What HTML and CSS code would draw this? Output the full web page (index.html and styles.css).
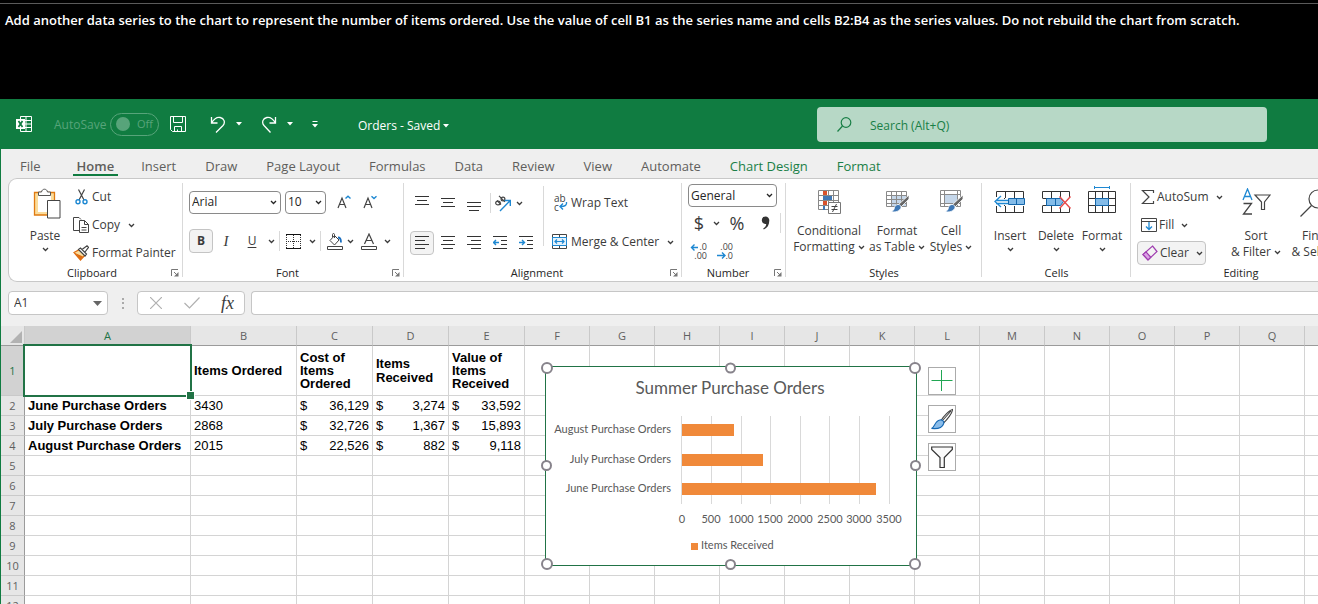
FILE: index.html
```html
<!DOCTYPE html>
<html lang="en">
<head>
<meta charset="utf-8">
<title>Orders - Excel</title>
<link rel="stylesheet" href="styles.css">
</head>
<body>
<svg class="defs" aria-hidden="true">
  <symbol id="chev" viewBox="0 0 7 5"><path d="M1 1l2.5 2.5L6 1" fill="none" stroke="currentColor" stroke-width="1.3"/></symbol>
  <symbol id="caret" viewBox="0 0 6 4"><path d="M0 0h6L3 3.5z" fill="currentColor"/></symbol>
  <symbol id="launch" viewBox="0 0 8 8"><path d="M.5 7V.5H7M3 3l3.5 3.5" fill="none" stroke="#777"/><path d="M7.500 3v4.500H3z" fill="#777"/></symbol>
</svg>

<p class="task">Add another data series to the chart to represent the number of items ordered. Use the value of cell B1 as the series name and cells B2:B4 as the series values. Do not rebuild the chart from scratch.</p>

<div class="app">
  <header class="title-bar">
    <svg class="logo" width="16" height="16" viewBox="0 0 16 16"><path d="M4.500 .5h11v15h-11zM4 4.500h11.500M4 8h11.500M4 11.500h11.500M10 .5v15" fill="none" stroke="#fff"/><rect y="3" width="9" height="10" fill="#fff"/><path d="M2.500 5l4 6M6.500 5l-4 6" stroke="#107c41" stroke-width="1.700"/></svg>
    <span class="autosave">AutoSave</span>
    <button class="toggle" type="button" aria-label="AutoSave off"><span class="knob"></span>Off</button>
    <button class="tool" type="button" aria-label="Save"><svg width="16" height="16" viewBox="0 0 16 16" fill="none" stroke="#fff"><path d="M.5 .5h15v15H2.500l-2-2zM3.500 .5v6h9v-6M4.500 15.500v-5h7v5M7.500 15.500v-2"/></svg></button>
    <button class="tool undo" type="button" aria-label="Undo"><svg width="16" height="17" viewBox="0 0 16 17" fill="none" stroke="#fff" stroke-width="1.300"><path d="M1.500 1v6h6M1.700 6.700C4 3 7 .8 10.200 1.500c4 .8 5.400 4.800 2.800 8L6 16.500"/></svg><svg width="6" height="4"><use href="#caret"/></svg></button>
    <button class="tool redo" type="button" aria-label="Redo"><svg width="16" height="17" viewBox="0 0 16 17" fill="none" stroke="#fff" stroke-width="1.300"><path d="M14.500 1v6h-6M14.300 6.700C12 3 9 .8 5.800 1.500c-4 .8-5.400 4.800-2.800 8l6.500 7"/></svg><svg width="6" height="4"><use href="#caret"/></svg></button>
    <button class="tool" type="button" aria-label="Customize"><svg width="6" height="7" viewBox="0 0 6 7"><path d="M.5 .5h5" stroke="#fff"/><path d="M0 3h6L3 6.500z" fill="#fff"/></svg></button>
    <button class="doc-name" type="button">Orders - Saved <svg width="6" height="4"><use href="#caret"/></svg></button>
    <label class="search"><svg width="15" height="15" viewBox="0 0 15 15" fill="none" stroke="#1a7f47" stroke-width="1.200"><circle cx="9" cy="5.500" r="4.800"/><path d="M5.500 9L.5 14.500"/></svg><input type="search" placeholder="Search (Alt+Q)" aria-label="Search"></label>
  </header>

  <nav class="tabs">
    <a href="#">File</a><a href="#" class="current">Home</a><a href="#">Insert</a><a href="#">Draw</a><a href="#">Page Layout</a><a href="#">Formulas</a><a href="#">Data</a><a href="#">Review</a><a href="#">View</a><a href="#">Automate</a><a href="#" class="context">Chart Design</a><a href="#" class="context">Format</a>
  </nav>

  <div class="ribbon">
    <section class="group clipboard">
      <div class="body">
        <button class="big paste" type="button"><span class="pic"><svg width="28" height="31" viewBox="0 0 28 31"><path d="M2 4h19v23H2z" fill="#fbdc9b"/><path d="M5 7h13v17H5z" fill="#fff"/><path d="M1.500 4.500h20v22.500h-20z" fill="none" stroke="#e07a10" stroke-width="1.300"/><path d="M5.500 7.500V4h3C9 .3 14 .3 14.500 4h3v3.500z" fill="#fff" stroke="#555"/><path d="M14.500 12.500h12.500v17.500H14.500z" fill="#fff" stroke="#444"/></svg></span>Paste<svg class="below" width="7" height="5"><use href="#chev"/></svg></button>
        <div class="stack">
          <button class="line" type="button"><svg width="16" height="16" viewBox="0 0 16 16" fill="none"><path d="M5.500 .5L11 11M11.500 .5L6 11" stroke="#444" stroke-width="1.200"/><circle cx="5" cy="12.800" r="2" stroke="#1e88d2" stroke-width="1.400"/><circle cx="12" cy="12.800" r="2" stroke="#1e88d2" stroke-width="1.400"/></svg>Cut</button>
          <button class="line" type="button"><svg width="16" height="16" viewBox="0 0 16 16" fill="none" stroke="#444"><path d="M6 13.500H.5v-13H6l2 2M6.500 3.500h5l4 4v8h-9zM11.500 3.500v4h4M8.500 10.500h5M8.500 13h5"/></svg>Copy<svg class="gap-chev" width="7" height="5"><use href="#chev"/></svg></button>
          <button class="line" type="button"><svg width="16" height="16" viewBox="0 0 16 16"><path d="M1 7.500l5.500-3 5.500 5.500-4.500 5z" fill="#fbdc9b" stroke="#dd6b10" stroke-width="1.300"/><path d="M2 8l5.500 6.500 2.500-3z" fill="#dd6b10"/><path d="M5.500 4.500l2-1.500 6 6-1.500 2zM9 4.500L14 .8l1.500 1.500L12 7" fill="#fff" stroke="#444" stroke-width="1.200"/></svg>Format Painter</button>
        </div>
      </div>
      <footer><span>Clipboard</span><svg width="8" height="8"><use href="#launch"/></svg></footer>
    </section>

    <section class="group font">
      <div class="body rows">
        <div class="row first">
          <span class="picker name"><select aria-label="Font"><option>Arial</option></select><svg width="7" height="5"><use href="#chev"/></svg></span>
          <span class="picker size"><select aria-label="Font size"><option>10</option></select><svg width="7" height="5"><use href="#chev"/></svg></span>
          <button class="tile grow" type="button" aria-label="Increase font size"><svg width="14" height="14" viewBox="0 0 14 14" fill="none"><path d="M1 13L5 3l4 10M2.500 9.500h5" stroke="#444" stroke-width="1.200"/><path d="M8.500 3.500L11 1.200l2.500 2.300" stroke="#1e88d2" stroke-width="1.400"/></svg></button>
          <button class="tile" type="button" aria-label="Decrease font size"><svg width="14" height="14" viewBox="0 0 14 14" fill="none"><path d="M1 13L5 3l4 10M2.500 9.500h5" stroke="#444" stroke-width="1.200"/><path d="M8.500 1.200L11 3.500l2.500-2.300" stroke="#1e88d2" stroke-width="1.400"/></svg></button>
        </div>
        <div class="row">
          <button class="tile on bold" type="button">B</button>
          <button class="tile italic" type="button">I</button>
          <button class="tile underline" type="button">U</button>
          <button class="drop" type="button" aria-label="Underline styles"><svg width="7" height="5"><use href="#chev"/></svg></button>
          <i class="rule"></i>
          <button class="tile narrow" type="button" aria-label="Borders"><svg width="16" height="15" viewBox="0 0 16 15" fill="none" stroke="#333"><path d="M0 .5h15M0 14.500h15" stroke="#111"/><path d="M.5 1v13M14.500 1v13M7.500 1v13M0 7.500h15" stroke-dasharray="1 1"/></svg></button>
          <button class="drop" type="button" aria-label="Border styles"><svg width="7" height="5"><use href="#chev"/></svg></button>
          <i class="rule"></i>
          <button class="tile narrow" type="button" aria-label="Fill color"><svg width="16" height="17" viewBox="0 0 16 17" fill="none" stroke="#444"><path d="M3 7.500l4.500-5 4.500 4.500-4.500 5zM7.500 5V1.500c0-1.300-2-1.300-2 0V4"/><path d="M11 4.500c2 0 3 1 3 5" stroke="#1b6fc0" stroke-width="1.800"/><path d="M.5 13.500h15v3H.500z"/></svg></button>
          <button class="drop slim" type="button" aria-label="Fill colors"><svg width="7" height="5"><use href="#chev"/></svg></button>
          <button class="tile wide" type="button" aria-label="Font color"><svg width="16" height="17" viewBox="0 0 16 17" fill="none" stroke="#444"><path d="M3.500 11L8 1l4.500 10M5 7.500h6" stroke-width="1.200"/><path d="M.5 13.500h15v3H.500z"/></svg></button>
          <button class="drop slim" type="button" aria-label="Font colors"><svg width="7" height="5"><use href="#chev"/></svg></button>
        </div>
      </div>
      <footer><span>Font</span><svg width="8" height="8"><use href="#launch"/></svg></footer>
    </section>

    <section class="group alignment">
      <div class="body">
        <div class="rows">
          <div class="row first spaced">
            <button class="tile" type="button" aria-label="Top align"><svg width="14" height="16" viewBox="0 0 14 16" stroke="#333"><path d="M0 1.500h14M2 5.500h10M0 9.500h14"/></svg></button>
            <button class="tile" type="button" aria-label="Middle align"><svg width="14" height="16" viewBox="0 0 14 16" stroke="#333"><path d="M0 3.500h14M2 7.500h10M0 11.500h14"/></svg></button>
            <button class="tile" type="button" aria-label="Bottom align"><svg width="14" height="16" viewBox="0 0 14 16" stroke="#333"><path d="M0 7.500h14M0 11.500h14M2 15.500h10"/></svg></button>
            <i class="rule first-rule"></i>
            <button class="tile" type="button" aria-label="Orientation"><svg width="17" height="17" viewBox="0 0 17 17" fill="none"><g stroke="#444" stroke-width="1.200"><ellipse cx="4" cy="8" rx="2.300" ry="1.900"/><path d="M3 5.500l4 4M5 .8l6 6"/><circle cx="9" cy="4" r="1.900"/></g><path d="M6 16L15.800 6M10.500 5.500h5.800v5.500" stroke="#1e88d2" stroke-width="1.400"/></svg></button>
            <button class="drop slim" type="button" aria-label="Orientation options"><svg width="7" height="5"><use href="#chev"/></svg></button>
          </div>
          <div class="row spaced">
            <button class="tile on" type="button" aria-label="Align left"><svg width="14" height="14" viewBox="0 0 14 14" stroke="#333"><path d="M0 .5h14M0 4.500h10M0 8.500h14M0 12.500h10"/></svg></button>
            <button class="tile" type="button" aria-label="Center"><svg width="14" height="14" viewBox="0 0 14 14" stroke="#333"><path d="M0 .5h14M2 4.500h10M0 8.500h14M2 12.500h10"/></svg></button>
            <button class="tile" type="button" aria-label="Align right"><svg width="14" height="14" viewBox="0 0 14 14" stroke="#333"><path d="M0 .5h14M4 4.500h10M0 8.500h14M4 12.500h10"/></svg></button>
            <button class="tile" type="button" aria-label="Decrease indent"><svg width="14" height="14" viewBox="0 0 14 14" fill="none" stroke="#333"><path d="M0 .5h14M8 4.500h6M8 8.500h6M0 12.500h14"/><path d="M6 6.500H.8M3 4L.6 6.500 3 9" stroke="#1e88d2" stroke-width="1.400"/></svg></button>
            <button class="tile" type="button" aria-label="Increase indent"><svg width="14" height="14" viewBox="0 0 14 14" fill="none" stroke="#333"><path d="M0 .5h14M8 4.500h6M8 8.500h6M0 12.500h14"/><path d="M0 6.500h5.300M3 4l2.500 2.500L3 9" stroke="#1e88d2" stroke-width="1.400"/></svg></button>
          </div>
        </div>
        <i class="rule tall"></i>
        <div class="stack wrapping">
          <button class="line" type="button"><svg width="16" height="24" viewBox="0 0 16 24" fill="none"><text x="2" y="11" class="mini">ab</text><text x="2" y="20" class="mini">c</text><path d="M14.500 11c.5 3-1 4.500-6 4.500M11 12.500l-3 3 3 3" stroke="#1e88d2" stroke-width="1.400"/></svg>Wrap Text</button>
          <button class="line" type="button"><svg width="16" height="16" viewBox="0 0 16 16" fill="none"><path d="M.5 .5h14v14H.500zM7.500 .5v3M7.500 11.500v3" stroke="#444"/><path d="M.5 3.500h14v8H.500z" fill="#e5f2fb" stroke="#1e88d2"/><path d="M3 7.500h9M5 5.500l-2 2 2 2M10 5.500l2 2-2 2" stroke="#1e88d2" stroke-width="1.200"/></svg>Merge &amp; Center<svg class="gap-chev" width="7" height="5"><use href="#chev"/></svg></button>
        </div>
      </div>
      <footer><span>Alignment</span><svg width="8" height="8"><use href="#launch"/></svg></footer>
    </section>

    <section class="group number">
      <div class="body rows">
        <span class="picker format"><select aria-label="Number format"><option>General</option></select><svg width="7" height="5"><use href="#chev"/></svg></span>
        <div class="row symbols">
          <button class="tile" type="button">$</button><button class="drop" type="button" aria-label="Currencies"><svg width="7" height="5"><use href="#chev"/></svg></button><button class="tile wide" type="button">%</button><button class="tile comma" type="button" aria-label="Comma style"><svg width="9" height="14" viewBox="0 0 9 14"><path d="M4.500 .5a3.800 3.800 0 0 1 3.800 4c0 4.500-2 7.500-5.500 9l-.6-1c2-1.200 3-2.800 3-4.500C2.600 8.300.8 6.600.8 4.300A3.700 3.700 0 0 1 4.500 .5z" fill="#333"/></svg></button><i class="rule"></i>
        </div>
        <div class="row decimals">
          <button class="tile" type="button" aria-label="Increase decimal"><svg width="18" height="24" viewBox="0 0 18 24" fill="none"><text x="17" y="11" class="digits">.0</text><text x="17" y="20" class="digits">.00</text><path d="M8 8.500H1.800M4.500 5.500l-3 3 3 3" stroke="#1e88d2" stroke-width="1.400"/></svg></button>
          <button class="tile" type="button" aria-label="Decrease decimal"><svg width="18" height="24" viewBox="0 0 18 24" fill="none"><text x="17" y="11" class="digits">.00</text><text x="17" y="20" class="digits">.0</text><path d="M1 16.500h7.500M6 13.500l3 3-3 3" stroke="#1e88d2" stroke-width="1.400"/></svg></button>
        </div>
      </div>
      <footer><span>Number</span><svg width="8" height="8"><use href="#launch"/></svg></footer>
    </section>

    <section class="group styles">
      <div class="body">
        <button class="big" type="button"><span class="pic"><svg width="24" height="24" viewBox="0 0 24 24" fill="none"><path d="M.5 .5h20v19H.500zM.5 5.500h20M.5 10.500h20M.5 15.500h20M5.500 .5v19M10.500 .5v19M15.500 .5v19" stroke="#888"/><path d="M5 1h4v4H5zM5 11h4v4H5z" fill="#d9532c"/><path d="M5 6h9v4H5zM5 16h2v4H5z" fill="#3f78b5"/><path d="M10.500 12.500h12v11h-12z" fill="#fff" stroke="#777"/><path d="M13.500 16.500h6M13.500 19.500h6M18.500 14l-4 8" stroke="#444"/></svg></span><span>Conditional<br>Formatting <svg width="7" height="5"><use href="#chev"/></svg></span></button>
        <button class="big" type="button"><span class="pic"><svg width="24" height="24" viewBox="0 0 24 24" fill="none"><path d="M6 6h15v10H6z" fill="#c5d7ea"/><path d="M.5 1.500h20v15H.500zM.5 5.500h20M.5 9.500h20M.5 13.500h20M5.500 1.500v15M10.500 1.500v15M15.500 1.500v15" stroke="#8a8a8a"/><path d="M23 5v4l-8 8-3-2z" fill="#666" stroke="#fff" stroke-width=".8"/><path d="M12 14.500c3 0 4 3 2 5-2 2.500-6 3-9 2 3-1 3-2 3.500-4 .5-1.800 2-3 3.500-3z" fill="#3f78b5" stroke="#fff" stroke-width=".8"/></svg></span><span>Format<br>as Table <svg width="7" height="5"><use href="#chev"/></svg></span></button>
        <button class="big" type="button"><span class="pic"><svg width="24" height="24" viewBox="0 0 24 24" fill="none"><path d="M5 5h12v9H5z" fill="#c5d7ea"/><path d="M.5 .5h20v16H.500zM.5 4.500h20M.5 13.500h20M4.500 .5v16M17.500 .5v16" stroke="#8a8a8a"/><path d="M23 5v4l-8 8-3-2z" fill="#666" stroke="#fff" stroke-width=".8"/><path d="M12 14.500c3 0 4 3 2 5-2 2.500-6 3-9 2 3-1 3-2 3.500-4 .5-1.800 2-3 3.500-3z" fill="#3f78b5" stroke="#fff" stroke-width=".8"/></svg></span><span>Cell<br>Styles <svg width="7" height="5"><use href="#chev"/></svg></span></button>
      </div>
      <footer><span>Styles</span></footer>
    </section>

    <section class="group cells">
      <div class="body">
        <button class="big" type="button"><span class="pic"><svg width="32" height="28" viewBox="0 0 32 28" fill="none"><path d="M2.500 5.500h27v21h-27zM2.500 12.500h27M2.500 19.500h27M11.500 5.500v21M20.500 5.500v21" stroke="#333"/><path d="M11 12h20v8H11z" fill="#fff"/><path d="M14.500 12.500h16v6h-16zM22.500 12.500v6" fill="#83bbe8" stroke="#1567ab"/><path d="M0 11h10v9H0z" fill="#fff"/><path d="M7 10l-6 5.500L7 21M2 14.500h12M2 17.500h12" stroke="#1e88d2" stroke-width="1.300"/></svg></span>Insert<svg class="below" width="7" height="5"><use href="#chev"/></svg></button>
        <button class="big" type="button"><span class="pic"><svg width="32" height="28" viewBox="0 0 32 28" fill="none"><path d="M2.500 12V5.500h27V12M2.500 12.500h27M2.500 20v6.500h27V20M2.500 19.500h27M11.500 5.500v7M20.500 5.500v7M11.500 19.500v7M20.500 19.500v7" stroke="#333"/><path d="M18 11h14v10H18z" fill="#fff"/><path d="M6.500 12.500h14l3 3-3 4h-14zM15.500 12.500v7" fill="#83bbe8" stroke="#1567ab"/><path d="M19.500 10.500l11 12M30.500 10.500l-11 12" stroke="#e64b4b" stroke-width="1.400"/></svg></span>Delete<svg class="below" width="7" height="5"><use href="#chev"/></svg></button>
        <button class="big" type="button"><span class="pic"><svg width="32" height="28" viewBox="0 0 32 28" fill="none"><path d="M2.500 5.500h27v21h-27zM2.500 12.500h27M2.500 19.500h27M9.500 5.500v21M22.500 5.500v21M16.500 5.500v7M16.500 19.500v7" stroke="#333"/><path d="M9.500 12.500h13v7h-13z" fill="#83bbe8" stroke="#1567ab"/><path d="M8.500 0v3M23.500 0v3M8 1.500h16" stroke="#1e88d2"/></svg></span>Format<svg class="below" width="7" height="5"><use href="#chev"/></svg></button>
      </div>
      <footer><span>Cells</span></footer>
    </section>

    <section class="group editing">
      <div class="body">
        <div class="stack">
          <button class="line" type="button"><svg width="14" height="16" viewBox="0 0 14 16" fill="none" stroke="#444" stroke-width="1.200"><path d="M12.500 4V1.500H1.500L8 8l-6.500 6.500h11V12"/></svg>AutoSum<svg class="gap-chev" width="7" height="5"><use href="#chev"/></svg></button>
          <button class="line" type="button"><svg width="16" height="14" viewBox="0 0 16 14" fill="none"><path d="M.5 .5h15v13H.500zM.5 3.500h15" stroke="#444"/><path d="M8 4v7.500M5 8.500l3 3 3-3" stroke="#1e88d2" stroke-width="1.300"/></svg>Fill<svg class="gap-chev" width="7" height="5"><use href="#chev"/></svg></button>
          <button class="line on" type="button"><svg width="16" height="16" viewBox="0 0 16 16" fill="none" stroke="#a03fb0" stroke-width="1.200"><path d="M10.500 1L15 6.500 6 15 1 9.500z"/><path d="M4 6.800l4.800 5.500L6 15 1 9.500z" fill="#dca3e6"/></svg>Clear<svg class="gap-chev" width="7" height="5"><use href="#chev"/></svg></button>
        </div>
        <button class="big sort" type="button"><span class="pic"><svg width="30" height="28" viewBox="0 0 30 28" fill="none"><path d="M2 12L6.500 1 11 12M3.500 8.500h6" stroke="#1e88d2" stroke-width="1.300"/><path d="M2.500 15.500h8l-8 10.500h8.500" stroke="#444" stroke-width="1.300"/><path d="M14 7h15l-5.500 7v7.500h-3V14z" stroke="#444" stroke-width="1.200"/></svg></span><span>Sort<br>&amp; Filter <svg width="7" height="5"><use href="#chev"/></svg></span></button>
        <button class="big find" type="button"><span class="pic"><svg width="28" height="30" viewBox="0 0 28 30" fill="none" stroke="#444" stroke-width="1.200"><circle cx="18" cy="11" r="9"/><path d="M11.500 17.500L.5 28.500"/></svg></span><span>Find<br>&amp; Select</span></button>
      </div>
      <footer><span>Editing</span></footer>
    </section>
  </div>

  <div class="formula-bar">
    <label class="name-box"><input value="A1" aria-label="Name box"><svg width="9" height="5" viewBox="0 0 9 5"><path d="M0 0h9L4.500 5z" fill="#666"/></svg></label>
    <svg class="dots" width="2" height="11" viewBox="0 0 2 11"><path d="M0 0h2v2H0zM0 4h2v2H0zM0 9h2v2H0z" fill="#aaa"/></svg>
    <div class="entry">
      <button type="button" aria-label="Cancel"><svg width="12" height="12" viewBox="0 0 12 12" stroke="#b0b0b0" stroke-width="1.200"><path d="M0 0l12 12M12 0L0 12"/></svg></button>
      <button type="button" aria-label="Enter"><svg width="16" height="12" viewBox="0 0 16 12" fill="none" stroke="#b0b0b0" stroke-width="1.200"><path d="M.5 6l5 5L15.500 .5"/></svg></button>
      <button type="button" class="fx">fx</button>
    </div>
    <input class="formula" aria-label="Formula">
  </div>

  <main class="sheet">
    <table>
      <colgroup><col class="gutter"><col class="col-a"><col class="col-b"><col class="col-c" span="3"><col class="col-f" span="13"></colgroup>
      <thead><tr><th class="corner"><svg width="12" height="12" viewBox="0 0 12 12"><path d="M12 0v12H0z" fill="#b2b2b2"/></svg></th><th class="picked">A</th><th>B</th><th>C</th><th>D</th><th>E</th><th>F</th><th>G</th><th>H</th><th>I</th><th>J</th><th>K</th><th>L</th><th>M</th><th>N</th><th>O</th><th>P</th><th>Q</th><th></th></tr></thead>
      <tbody>
      <tr class="heads"><th class="picked">1</th><td class="active"><span class="cursor"></span></td><td>Items Ordered</td><td>Cost of Items Ordered</td><td class="two-line">Items Received</td><td>Value of Items Received</td><td><td><td><td><td><td><td><td><td><td><td><td><td></tr>
      <tr><th>2</th><td class="strong">June Purchase Orders</td><td>3430</td><td><div class="money"><span>$</span><span>36,129</span></div></td><td><div class="money"><span>$</span><span>3,274</span></div></td><td><div class="money"><span>$</span><span>33,592</span></div></td><td><td><td><td><td><td><td><td><td><td><td><td><td></tr>
      <tr><th>3</th><td class="strong">July Purchase Orders</td><td>2868</td><td><div class="money"><span>$</span><span>32,726</span></div></td><td><div class="money"><span>$</span><span>1,367</span></div></td><td><div class="money"><span>$</span><span>15,893</span></div></td><td><td><td><td><td><td><td><td><td><td><td><td><td></tr>
      <tr><th>4</th><td class="strong">August Purchase Orders</td><td>2015</td><td><div class="money"><span>$</span><span>22,526</span></div></td><td><div class="money"><span>$</span><span>882</span></div></td><td><div class="money"><span>$</span><span>9,118</span></div></td><td><td><td><td><td><td><td><td><td><td><td><td><td></tr>
      <tr><th>5</th><td><td><td><td><td><td><td><td><td><td><td><td><td><td><td><td><td><td></tr>
      <tr><th>6</th><td><td><td><td><td><td><td><td><td><td><td><td><td><td><td><td><td><td></tr>
      <tr><th>7</th><td><td><td><td><td><td><td><td><td><td><td><td><td><td><td><td><td><td></tr>
      <tr><th>8</th><td><td><td><td><td><td><td><td><td><td><td><td><td><td><td><td><td><td></tr>
      <tr><th>9</th><td><td><td><td><td><td><td><td><td><td><td><td><td><td><td><td><td><td></tr>
      <tr><th>10</th><td><td><td><td><td><td><td><td><td><td><td><td><td><td><td><td><td><td></tr>
      <tr><th>11</th><td><td><td><td><td><td><td><td><td><td><td><td><td><td><td><td><td><td></tr>
      <tr><th>12</th><td><td><td><td><td><td><td><td><td><td><td><td><td><td><td><td><td><td></tr>
      </tbody>
    </table>

    <figure class="chart">
      <svg width="384" height="212" viewBox="-6 -6 384 212">
        <rect x=".5" y=".5" width="371" height="199" fill="#fff" stroke="#217346"/>
        <text class="chart-title" x="185" y="28" text-anchor="middle">Summer Purchase Orders</text>
        <path d="M136.500 50v88M166.500 50v88M196.500 50v88M225.500 50v88M255.500 50v88M284.500 50v88M314.500 50v88M344.500 50v88" stroke="#d9d9d9"/>
        <g fill="#f0893a"><rect x="137" y="58" width="52" height="12"/><rect x="137" y="88" width="81" height="12"/><rect x="137" y="117" width="194" height="12"/><rect x="146" y="177" width="7" height="7"/></g>
        <g class="chart-text">
          <g text-anchor="end"><text x="126" y="67">August Purchase Orders</text><text x="126" y="97">July Purchase Orders</text><text x="126" y="126">June Purchase Orders</text></g>
          <g text-anchor="middle"><text x="137" y="157">0</text><text x="166" y="157">500</text><text x="196" y="157">1000</text><text x="225" y="157">1500</text><text x="255" y="157">2000</text><text x="285" y="157">2500</text><text x="314" y="157">3000</text><text x="344" y="157">3500</text></g>
          <text x="156" y="183">Items Received</text>
        </g>
        <g fill="#fff" stroke="#87838b" stroke-width="2"><circle cx="2" cy="2" r="5"/><circle cx="185.500" cy="2" r="4.500"/><circle cx="370" cy="2" r="5"/><circle cx="1.500" cy="99.500" r="4.500"/><circle cx="370.500" cy="99.500" r="4.500"/><circle cx="2" cy="198" r="5"/><circle cx="185.500" cy="198.500" r="4.500"/><circle cx="370" cy="198" r="5"/></g>
      </svg>
      <div class="chart-tools">
        <button type="button" aria-label="Chart elements"><svg width="22" height="22" viewBox="0 0 22 22" stroke="#21a653"><path d="M.5 10.500h21M10.500 0v21"/></svg></button>
        <button type="button" aria-label="Chart styles"><svg width="22" height="22" viewBox="0 0 22 22" stroke-width="1.100"><path d="M21.500 1.500c-3 .5-9 7-11.500 11l2.500 2.500C16 12 21.500 5 21.500 1.500zM20 3l-8 9" fill="#fff" stroke="#444"/><path d="M9 12c2.500-.5 4.500 1.500 3.500 4-1.500 4.500-7 5-12 4.500C4 19 3.500 13 9 12z" fill="#8bbdea" stroke="#1668b3"/></svg></button>
        <button type="button" aria-label="Chart filters"><svg width="22" height="22" viewBox="0 0 22 22"><path d="M.7 1h20.600v2.500l-8 8V21.500H9V11.500l-8.300-8z" fill="#fafafa" stroke="#333" stroke-width="1.200"/></svg></button>
      </div>
    </figure>
  </main>
</div>
</body>
</html>
```
FILE: styles.css
```css
* { box-sizing: border-box; }

body {
  margin: 0;
  height: 100vh;
  display: flex;
  flex-direction: column;
  overflow: hidden;
  background: #000;
  color: #3b3b3b;
  font: 12px/16px "Open Sans", "Noto Sans", sans-serif;
}

button, input, select {
  margin: 0;
  padding: 0;
  border: 0;
  background: none;
  color: inherit;
  font: inherit;
}

svg { flex: none; }
.defs { position: absolute; width: 0; height: 0; }

.task {
  margin: 3px 0 0;
  height: 96px;
  padding: 8px 5px;
  border-top: 1px solid #5a5a5a;
  color: #fff;
  font-size: 13px;
  font-weight: 600;
  white-space: nowrap;
}

.app {
  flex: 1;
  min-height: 0;
  display: flex;
  flex-direction: column;
  border-left: 1px solid #107c41;
  background: #efefef;
}

/* Title bar */
.title-bar {
  flex: none;
  height: 50px;
  display: flex;
  align-items: center;
  padding: 0 51px 0 15px;
  background: #107c41;
  color: #fff;
  font-size: 12px;
}
.autosave { width: 56px; margin-left: 22px; padding-top: 2px; color: #57a47a; }
.toggle {
  width: 49px;
  height: 23px;
  margin-right: 11px;
  display: flex;
  align-items: center;
  gap: 7px;
  padding-left: 5px;
  border: 1px solid #57a47a;
  border-radius: 12px;
  color: #57a47a;
  font-size: 11px;
}
.knob { width: 14px; height: 14px; border-radius: 50%; background: #57a47a; }
.tool { display: flex; align-items: center; gap: 10px; }
.undo { margin-left: 24px; }
.redo { margin: 0 19px; }
.doc-name { display: flex; align-items: center; gap: 3px; margin-left: 40px; padding-top: 3px; }
.search {
  width: 450px;
  height: 35px;
  margin-left: auto;
  display: flex;
  align-items: center;
  gap: 18px;
  padding-left: 20px;
  border-radius: 4px;
  background: #b7d8c6;
}
.search input { flex: 1; padding-top: 3px; outline: 0; }
.search input::placeholder { color: #1a7f47; opacity: 1; }

/* Tabs */
.tabs {
  flex: none;
  height: 29px;
  display: flex;
  gap: 29px;
  padding: 6px 19px 0;
  font-size: 13px;
}
.tabs a { height: 21px; line-height: 22px; color: #605e5c; text-decoration: none; white-space: nowrap; }
.tabs .current { margin: 0 -6px 0 3px; padding: 0 4px; border-bottom: 2px solid #107c41; font-weight: 600; }
.tabs .context { color: #1a7f47; }

/* Ribbon */
.ribbon {
  flex: none;
  display: flex;
  margin-left: 7px;
  border: 1px solid #c8c8c8;
  border-right: 0;
  border-radius: 9px 0 0 9px;
  background: #fff;
  overflow: hidden;
}
.group { position: relative; flex: none; }
.group::after {
  content: "";
  position: absolute;
  top: 4px;
  right: 0;
  bottom: 4px;
  border-right: 1px solid #d9d9d9;
}
.clipboard { width: 174px; }
.font { width: 221px; }
.alignment { width: 278px; }
.number { width: 104px; }
.styles { width: 196px; }
.cells { width: 149px; }
.editing { width: 220px; }
.body { display: flex; height: 86px; padding-top: 4px; }
.group footer {
  display: flex;
  align-items: center;
  height: 16px;
  color: #262626;
  font-size: 11px;
}
.group footer span { flex: 1; text-align: center; }
.group footer svg { margin-right: 4px; }
.clipboard footer { padding-left: 4px; }

.big {
  flex: none;
  display: flex;
  flex-direction: column;
  align-items: center;
  padding-top: 5px;
  white-space: nowrap;
}
.pic { height: 40px; }
.big .below { margin-top: 3px; }
.big span svg { vertical-align: middle; }
.pic svg { display: block; }
.paste { width: 64px; padding-left: 8px; }
.paste .pic { padding-left: 4px; }
.styles .pic { height: 35px; padding: 2px 0 0 2px; }
.styles .big { width: 50px; }
.styles .big:first-child { width: 86px; }
.styles .big:last-child { width: 58px; }
.cells .body { padding-left: 5px; }
.cells .big { width: 46px; padding-top: 3px; }
.cells .pic { height: 42px; }
.sort { width: 66px; }
.find { width: 50px; }

.stack { display: flex; flex-direction: column; align-items: flex-start; }
.line { flex: none; height: 28px; display: flex; align-items: center; gap: 3px; white-space: nowrap; }
.gap-chev { margin-left: 5px; }
.editing .stack { width: 92px; padding-left: 6px; }
.editing .line { gap: 2px; padding: 0 2px 0 4px; }
.editing .line.on { height: 24px; margin-top: 2px; }
.wrapping { padding: 6px 0 0 8px; gap: 11px; }

.rows { display: flex; flex-direction: column; padding-left: 6px; }
.row { display: flex; align-items: center; height: 24px; margin-top: 15px; }
.row.first { margin-top: 7px; }
.spaced { gap: 2px; }
.alignment .rows { width: 139px; }
.alignment .first { height: 26px; }
.tile {
  width: 26px;
  height: 24px;
  display: flex;
  align-items: center;
  justify-content: center;
}
.spaced .tile, .tile.bold { width: 24px; }
.tile.narrow { width: 24px; }
.tile.wide { width: 30px; }
.tile.grow { margin-left: 5px; }
.on { border: 1px solid #c4c4c4; border-radius: 4px; background: #f3f3f3; }
.bold { font-weight: 700; }
.italic { font-family: "Liberation Serif", serif; font-size: 15px; font-style: italic; }
.underline { text-decoration: underline; text-underline-offset: 2px; }
.drop { width: 12px; height: 24px; display: flex; align-items: center; justify-content: center; }
.drop.slim { width: 7px; }
.rule { width: 1px; height: 20px; margin: 0 2px; background: #d9d9d9; }
.rule.first-rule { margin: 0 -3px 0 2px; }
.rule.tall { height: 60px; margin: 3px 0 0; }

.picker {
  display: grid;
  align-items: center;
  height: 23px;
  border: 1px solid #8a8a8a;
  border-radius: 4px;
  color: #262626;
}
.picker > * { grid-area: 1 / 1; }
.picker select { width: 100%; height: 21px; padding-left: 2px; appearance: none; outline: 0; }
.picker svg { justify-self: end; margin-right: 3px; pointer-events: none; }
.picker.name { width: 92px; }
.picker.size { width: 41px; margin-left: 4px; }
.picker.format { flex: none; width: 89px; margin-top: 1px; }

.symbols { margin-top: 4px; font-size: 18px; }
.symbols .tile:first-child { width: 22px; }
.decimals { margin-top: 4px; }
.decimals .tile { width: 26px; justify-content: flex-start; padding-left: 2px; }
.digits { fill: #444; font: 9px "Open Sans", sans-serif; text-anchor: end; }
.mini { fill: #444; font: 10px "Open Sans", sans-serif; }

/* Formula bar */
.formula-bar {
  flex: none;
  display: flex;
  align-items: center;
  height: 24px;
  margin: 9px 0 11px 7px;
}
.name-box, .entry, .formula {
  height: 24px;
  border: 1px solid #c6c6c6;
  border-radius: 4px;
  background: #fff;
}
.name-box { width: 100px; display: flex; align-items: center; padding: 0 5px; }
.name-box input { flex: 1; min-width: 0; font-size: 12px; outline: 0; }
.dots { margin: 0 13px 0 14px; }
.entry { width: 108px; display: flex; align-items: center; justify-content: space-between; padding: 0 10px 0 12px; }
.entry button { display: flex; }
.fx { font: italic 18px/20px "Liberation Serif", serif; }
.formula { flex: 1; min-width: 0; margin-left: 6px; border-right: 0; border-radius: 4px 0 0 4px; }

/* Sheet */
.sheet { position: relative; flex: 1; min-height: 0; overflow: hidden; background: #fff; }
table { table-layout: fixed; width: 1369px; border-spacing: 0; }
.gutter { width: 24px; }
.col-a { width: 166px; }
.col-b { width: 106px; }
.col-c { width: 76px; }
.col-f { width: 65px; }
th, td { height: 20px; padding: 0; border: solid #d4d4d4; border-width: 0 1px 1px 0; }
th { background: #e6e6e6; color: #5f5f5f; font-size: 11px; font-weight: 400; line-height: 16px; }
thead th { border-color: #c9c9c9; border-bottom-color: #9b9b9b; }
tbody th { border-right-color: #9b9b9b; border-bottom-color: #c9c9c9; }
th.picked { background: #d2d2d2; color: #217346; }
.corner svg { display: block; margin: 3px 2px 0 auto; }
td { padding: 0 3px; color: #000; font: 13px/15px "Liberation Sans", Arial, sans-serif; }
td.strong { white-space: nowrap; }
.strong, .heads td { font-weight: 700; }
.heads > * { height: 50px; }
.heads td { line-height: 13px; }
.heads .two-line { line-height: 14px; }
.money { display: flex; justify-content: space-between; }
.active { position: relative; }
.cursor { position: absolute; inset: -2px; z-index: 1; border: 2px solid #217346; }
.cursor::after {
  content: "";
  position: absolute;
  right: -5px;
  bottom: -5px;
  width: 7px;
  height: 7px;
  border: 1px solid #fff;
  background: #217346;
}

/* Chart floating over the cells */
.chart { position: absolute; left: 538px; top: 34px; margin: 0; display: flex; }
.chart-title { fill: #595959; font: 17px Lato, sans-serif; }
.chart-text { fill: #595959; font: 11px Lato, sans-serif; }
.chart-tools { display: flex; flex-direction: column; gap: 10px; margin: 7px 0 0 5px; }
.chart-tools button {
  width: 28px;
  height: 28px;
  display: flex;
  align-items: center;
  justify-content: center;
  border: 1px solid #ababab;
  background: #fff;
}
```
